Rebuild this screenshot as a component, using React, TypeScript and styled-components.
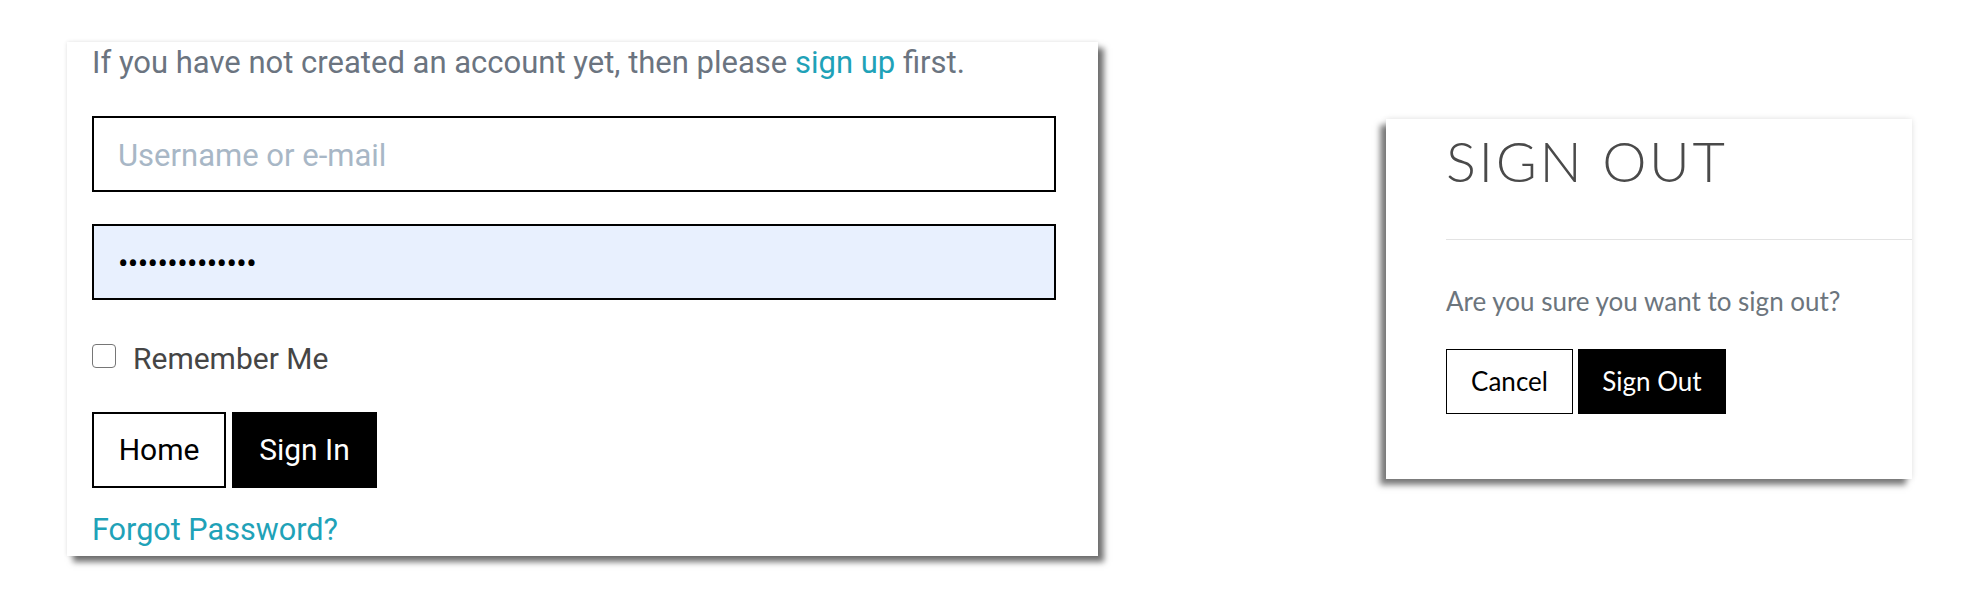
import React from "react";
import styled, { createGlobalStyle } from "styled-components";

const Global = createGlobalStyle`
  html, body { margin: 0; padding: 0; background: #ffffff; }
  * { box-sizing: border-box; }
`;

const Page = styled.div`
  display: flex;
  align-items: center;
  height: 597px;
  width: 1971px;
  padding-left: 67px;
  gap: 288px;
  background: #ffffff;
`;

const LoginCard = styled.div`
  width: 1031px;
  height: 514px;
  padding: 1px 42px 6px 25px;
  background: #ffffff;
  display: flex;
  flex-direction: column;
  font-family: Roboto, "Liberation Sans", sans-serif;
  box-shadow: 0 0 4px rgba(0, 0, 0, 0.12), 6px 6px 6px rgba(0, 0, 0, 0.55);
`;

const Intro = styled.p`
  margin: 0;
  font-size: 31px;
  line-height: 40px;
  color: #6b7480;
  white-space: nowrap;
`;

const Link = styled.a`
  color: #1fa2b8;
  text-decoration: none;
  cursor: pointer;
`;

const Field = styled.input<{ $filled?: boolean; $top: number }>`
  display: block;
  width: 964px;
  height: 76px;
  margin: ${(p) => p.$top}px 0 0;
  padding: 3px 24px 0;
  border: 2px solid #000000;
  border-radius: 0;
  outline: none;
  font-family: Roboto, "Liberation Sans", sans-serif;
  font-size: 31px;
  color: #000000;
  background: ${(p) => (p.$filled ? "#e8f0fe" : "#ffffff")};
  letter-spacing: ${(p) => (p.$filled ? "-0.6px" : "0")};
  &::placeholder {
    color: #a8b7c6;
    opacity: 1;
  }
`;

const CheckRow = styled.label`
  display: flex;
  align-items: center;
  gap: 17px;
  height: 30px;
  margin-top: 44px;
  font-size: 30px;
  color: #454545;
`;

const Box = styled.input`
  appearance: none;
  width: 24px;
  height: 24px;
  margin: 0;
  border: 1.5px solid #767676;
  border-radius: 4px;
  background: #ffffff;
  position: relative;
  top: -3px;
`;

const ButtonRow = styled.div<{ $gap: number; $top: number }>`
  display: flex;
  gap: ${(p) => p.$gap}px;
  margin-top: ${(p) => p.$top}px;
`;

const LoginButton = styled.button<{ $primary?: boolean; $w: number }>`
  width: ${(p) => p.$w}px;
  height: 76px;
  padding: 0;
  border: 2px solid #000000;
  border-radius: 0;
  background: ${(p) => (p.$primary ? "#000000" : "#ffffff")};
  color: ${(p) => (p.$primary ? "#ffffff" : "#000000")};
  font-family: Roboto, "Liberation Sans", sans-serif;
  font-size: 30px;
  cursor: pointer;
`;

const Forgot = styled(Link)`
  display: block;
  margin-top: 22px;
  font-size: 30.6px;
  line-height: 40px;
`;

const SignOutCard = styled.div`
  width: 526px;
  height: 360px;
  padding: 8px 0 0 60px;
  background: #ffffff;
  display: flex;
  flex-direction: column;
  font-family: Lato, "Liberation Sans", sans-serif;
  box-shadow: 0 0 6px rgba(0, 0, 0, 0.12), -6px 6px 6px rgba(0, 0, 0, 0.5);
`;

const Title = styled.h1`
  margin: 0;
  font-family: Lato, "Liberation Sans", sans-serif;
  font-weight: 300;
  font-size: 56px;
  line-height: 1.2;
  letter-spacing: 2.6px;
  color: #4a4a4a;
`;

const Divider = styled.hr`
  margin: 45px 0 0;
  border: none;
  height: 1px;
  background: #e3e3e3;
`;

const Question = styled.p`
  margin: 46px 0 0;
  font-size: 26px;
  line-height: 1.2;
  color: #6c757d;
`;

const DialogButton = styled.button<{ $primary?: boolean; $w: number }>`
  width: ${(p) => p.$w}px;
  height: 65px;
  padding: 0;
  border: 1.5px solid #000000;
  border-radius: 0;
  background: ${(p) => (p.$primary ? "#000000" : "#ffffff")};
  color: ${(p) => (p.$primary ? "#ffffff" : "#000000")};
  font-family: Lato, "Liberation Sans", sans-serif;
  font-size: 26px;
  cursor: pointer;
`;

export default function App() {
  return (
    <>
      <Global />
      <Page>
        <LoginCard>
          <Intro>
            If you have not created an account yet, then please <Link>sign up</Link> first.
          </Intro>
          <Field type="text" $top={33} placeholder="Username or e-mail" />
          <Field type="password" $top={32} $filled defaultValue="abcdefghijklmn" readOnly />
          <CheckRow>
            <Box type="checkbox" />
            Remember Me
          </CheckRow>
          <ButtonRow $gap={6} $top={38}>
            <LoginButton $w={134}>Home</LoginButton>
            <LoginButton $w={145} $primary>
              Sign In
            </LoginButton>
          </ButtonRow>
          <Forgot>Forgot Password?</Forgot>
        </LoginCard>
        <SignOutCard>
          <Title>SIGN OUT</Title>
          <Divider />
          <Question>Are you sure you want to sign out?</Question>
          <ButtonRow $gap={5} $top={32}>
            <DialogButton $w={127}>Cancel</DialogButton>
            <DialogButton $w={148} $primary>
              Sign Out
            </DialogButton>
          </ButtonRow>
        </SignOutCard>
      </Page>
    </>
  );
}
